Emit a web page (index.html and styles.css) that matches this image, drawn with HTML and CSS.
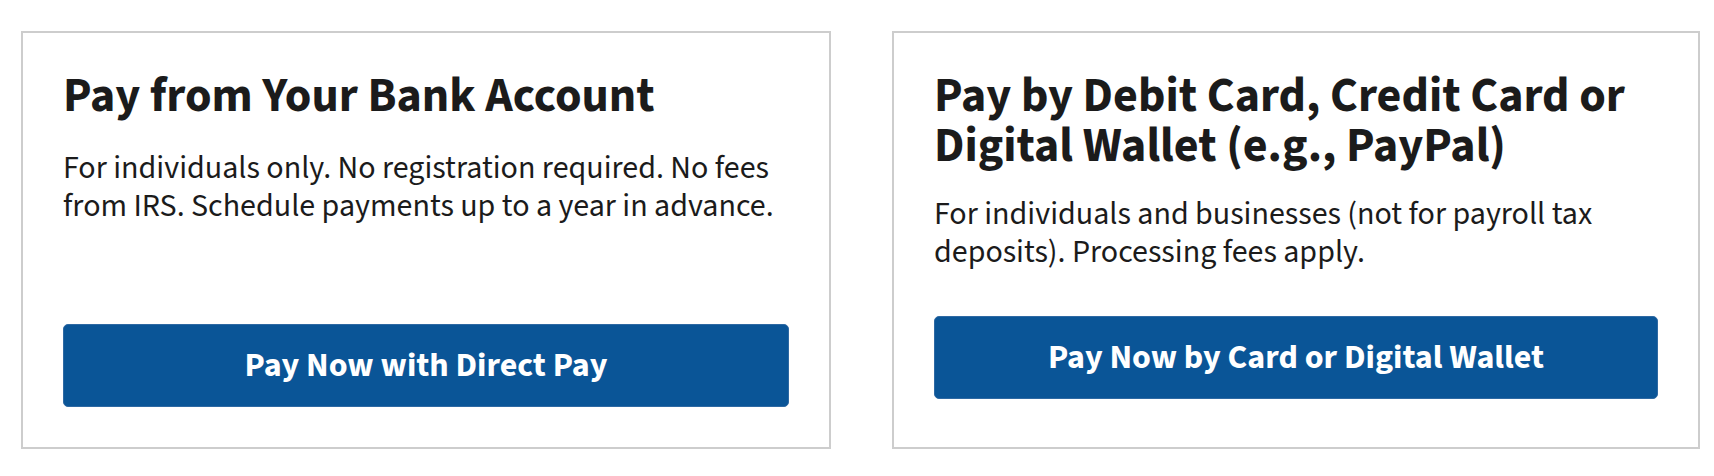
FILE: index.html
```html
<html lang="en">
  <head>
    <meta charset="utf-8">
    <meta name="viewport" content="width=device-width, initial-scale=1">
    <title>Make a Payment</title>
    <link rel="stylesheet" href="styles.css">
  </head>

  <body>
    <div class="pay-options">
      <div class="card card-short">
        <h2>Pay from Your Bank Account</h2>
        <p>For individuals only. No registration required. No fees from IRS. Schedule payments up to a year in advance.</p>
        <a class="pay-button" href="#">Pay Now with Direct Pay</a>
      </div>

      <div class="card">
        <h2>Pay by Debit Card, Credit Card or Digital Wallet (e.g., PayPal)</h2>
        <p>For individuals and businesses (not for payroll tax deposits). Processing fees apply.</p>
        <a class="pay-button" href="#">Pay Now by Card or Digital Wallet</a>
      </div>
    </div>
  </body>
</html>
```

FILE: styles.css
```css
body {
  margin: 0;
  font-family: "Source Sans 3", "Source Sans Pro", "Open Sans", sans-serif;
  color: #1b1b1b;
  background-color: white;
}

* {
  box-sizing: border-box;
}

.pay-options {
  display: grid;
  grid-template-columns: 810px 808px;
  column-gap: 61px;
  padding: 31px 0 0 21px;
}

.card {
  display: flex;
  flex-direction: column;
  border: 2px solid #cdcdcd;
  padding: 38px 40px 48px 40px;
}

.card.card-short {
  padding-bottom: 40px;
}

.card h2 {
  margin: 0;
  font-size: 48px;
  line-height: 50px;
  font-weight: 700;
}

.card p {
  margin: 24px 0 45px 0;
  font-size: 32px;
  line-height: 38px;
}

.card.card-short p {
  margin-top: 28px;
}

.pay-button {
  display: flex;
  align-items: center;
  justify-content: center;
  margin-top: auto;
  height: 83px;
  background-color: #0a5597;
  border: 1px solid #2e69a3;
  border-radius: 5px;
  color: white;
  font-size: 34px;
  font-weight: 700;
  text-decoration: none;
}
```
